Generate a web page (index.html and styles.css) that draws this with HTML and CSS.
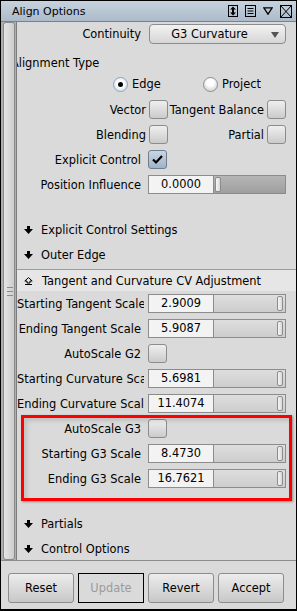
FILE: index.html
```html
<!DOCTYPE html>
<html lang="en">
<head>
  <meta charset="UTF-8">
  <title>Align Options</title>
  <link rel="stylesheet" href="styles.css">
</head>
<body>
  <div class="window">
    <div class="titlebar">
      <span class="title">Align Options</span>
      <div class="title-icons">
        <svg width="10" height="12" viewBox="0 0 10 12"><rect x="0.5" y="0.5" width="9" height="11" fill="none" stroke="#000"/><path d="M5 1.5 L8 4.5 H6 V7.5 H8 L5 10.5 L2 7.5 H4 V4.5 H2 Z" fill="#000"/></svg>
        <svg width="11" height="12" viewBox="0 0 11 12"><rect x="0.5" y="0.5" width="10" height="11" fill="none" stroke="#000"/><path d="M2.5 3.5 H8.5 M2.5 6 H8.5 M2.5 8.5 H8.5" stroke="#000"/></svg>
        <svg width="10" height="8" viewBox="0 0 10 8"><path d="M0.8 0.8 H9.2 L5 7.2 Z" fill="none" stroke="#000" stroke-width="1.3"/></svg>
        <svg width="12" height="13" viewBox="0 0 12 13"><rect x="0.5" y="0.5" width="11" height="12" fill="none" stroke="#000"/><path d="M0.5 0.5 L11.5 12.5 M11.5 0.5 L0.5 12.5" stroke="#000"/></svg>
      </div>
    </div>

    <div class="main">
      <div class="strip">
        <div class="strip-bar"><span class="grip"></span></div>
      </div>

      <div class="content">
        <div class="row top">
          <span class="lbl">Continuity</span>
          <div class="combo">G3 Curvature<span class="combo-arrow"></span></div>
        </div>

        <div class="group-title">Alignment Type</div>
        <div class="radios">
          <span class="radio-item"><span class="radio on"><span class="dot"></span></span>Edge</span>
          <span class="radio-item"><span class="radio"></span>Project</span>
        </div>

        <div class="checks first">
          <span class="lbl">Vector</span><span class="box"></span>
          <span class="lbl">Tangent Balance</span><span class="box"></span>
        </div>
        <div class="checks">
          <span class="lbl">Blending</span><span class="box"></span>
          <span class="lbl">Partial</span><span class="box"></span>
        </div>
        <div class="row">
          <span class="lbl">Explicit Control</span>
          <span class="box on"><svg width="13" height="11" viewBox="0 0 13 11"><path d="M2 5.5 L5 8.5 L11 2" fill="none" stroke="#000" stroke-width="2.2"/></svg></span>
        </div>
        <div class="row">
          <span class="lbl">Position Influence</span>
          <div class="numslider">
            <span class="field">0.0000</span>
            <span class="slider empty"><span class="thumb"></span></span>
          </div>
        </div>

        <div class="fold first">
          <svg class="arrow" width="9" height="8" viewBox="0 0 9 8"><path d="M3 0 H6 V3 H9 L4.5 8 L0 3 H3 Z" fill="#000"/></svg>
          Explicit Control Settings
        </div>
        <div class="fold">
          <svg class="arrow" width="9" height="8" viewBox="0 0 9 8"><path d="M3 0 H6 V3 H9 L4.5 8 L0 3 H3 Z" fill="#000"/></svg>
          Outer Edge
        </div>

        <div class="section-head">
          <svg width="9" height="8" viewBox="0 0 9 8"><path d="M4.5 0.6 L8.2 4 H6 V6 H3 V4 H0.8 Z" fill="none" stroke="#000"/><path d="M1 7.5 H8" stroke="#000"/></svg>
          Tangent and Curvature CV Adjustment
        </div>

        <div class="row">
          <span class="lbl">Starting Tangent Scale</span>
          <div class="numslider"><span class="field">2.9009</span><span class="slider"><span class="thumb"></span></span></div>
        </div>
        <div class="row">
          <span class="lbl">Ending Tangent Scale</span>
          <div class="numslider"><span class="field">5.9087</span><span class="slider"><span class="thumb"></span></span></div>
        </div>
        <div class="row">
          <span class="lbl">AutoScale G2</span>
          <span class="box"></span>
        </div>
        <div class="row">
          <span class="lbl">Starting Curvature Scale</span>
          <div class="numslider"><span class="field">5.6981</span><span class="slider"><span class="thumb"></span></span></div>
        </div>
        <div class="row">
          <span class="lbl">Ending Curvature Scale</span>
          <div class="numslider"><span class="field">11.4074</span><span class="slider"><span class="thumb"></span></span></div>
        </div>

        <div class="highlight">
          <div class="row">
            <span class="lbl">AutoScale G3</span>
            <span class="box"></span>
          </div>
          <div class="row">
            <span class="lbl">Starting G3 Scale</span>
            <div class="numslider"><span class="field">8.4730</span><span class="slider"><span class="thumb"></span></span></div>
          </div>
          <div class="row">
            <span class="lbl">Ending G3 Scale</span>
            <div class="numslider"><span class="field">16.7621</span><span class="slider"><span class="thumb"></span></span></div>
          </div>
        </div>

        <div class="fold first">
          <svg class="arrow" width="9" height="8" viewBox="0 0 9 8"><path d="M3 0 H6 V3 H9 L4.5 8 L0 3 H3 Z" fill="#000"/></svg>
          Partials
        </div>
        <div class="fold">
          <svg class="arrow" width="9" height="8" viewBox="0 0 9 8"><path d="M3 0 H6 V3 H9 L4.5 8 L0 3 H3 Z" fill="#000"/></svg>
          Control Options
        </div>
      </div>
    </div>

    <div class="buttons">
      <button class="btn">Reset</button>
      <button class="btn disabled">Update</button>
      <button class="btn">Revert</button>
      <button class="btn">Accept</button>
    </div>
  </div>
</body>
</html>
```

FILE: styles.css
```css
body {
  margin: 0;
  font-family: 'DejaVu Sans', sans-serif;
  font-size: 11.4px;
  color: #000;
}

.window {
  box-sizing: border-box;
  width: 297px;
  height: 611px;
  border: 1px solid #000;
  border-bottom-width: 2px;
  background: #dadada;
  display: flex;
  flex-direction: column;
}

.titlebar {
  height: 20px;
  border-bottom: 1px solid #76838f;
  background: linear-gradient(#c6d2de, #acbbca);
  display: flex;
  align-items: center;
  padding-left: 11px;
  padding-right: 4px;
}

.title {
  font-size: 11px;
}

.title-icons {
  margin-left: auto;
  display: flex;
  align-items: center;
  gap: 7px;
}

.title-icons svg {
  display: block;
}

.main {
  height: 538px;
  display: flex;
}

.strip {
  width: 15px;
  background: #aeaeae;
  padding: 0 1px 0 2px;
  box-sizing: border-box;
  display: flex;
}

.strip-bar {
  flex: 1;
  border: 1px solid #8a8a8a;
  border-radius: 3px;
  background: linear-gradient(to right, #e4e4e4, #cdcdcd);
  display: flex;
  align-items: center;
  justify-content: center;
}

.grip {
  width: 6px;
  height: 7px;
  border-top: 1px solid #8a8a8a;
  border-bottom: 1px solid #8a8a8a;
  background: linear-gradient(#8a8a8a, #8a8a8a) center / 6px 1px no-repeat;
  margin-left: 1px;
}

.content {
  flex: 1;
  border-left: 1px solid #7c7c7c;
  overflow: hidden;
}

.row {
  height: 25px;
  display: grid;
  grid-template-columns: 127px auto;
  column-gap: 4px;
  align-items: center;
}

.row.top {
  height: 24px;
}

.lbl {
  text-align: right;
  white-space: nowrap;
  overflow: hidden;
  padding-right: 3px;
}

.combo {
  box-sizing: border-box;
  width: 137px;
  height: 20px;
  margin-left: 1px;
  border: 1px solid #8c8c8c;
  border-radius: 4px;
  background: linear-gradient(#f2f2f2, #d6d6d6);
  display: flex;
  align-items: center;
  justify-content: center;
  padding-right: 16px;
  position: relative;
}

.combo-arrow {
  position: absolute;
  right: 6px;
  top: 7px;
  width: 0;
  height: 0;
  border-left: 4px solid transparent;
  border-right: 4px solid transparent;
  border-top: 6px solid #555;
}

.group-title {
  margin-top: 7px;
  height: 20px;
  line-height: 20px;
  margin-left: -6px;
  white-space: nowrap;
}

.radios {
  height: 22px;
  display: grid;
  grid-template-columns: 90px 90px;
  padding-left: 96px;
  align-items: center;
}

.radio-item {
  display: flex;
  align-items: center;
  gap: 4px;
}

.radio {
  box-sizing: border-box;
  width: 15px;
  height: 15px;
  border-radius: 50%;
  border: 1px solid #8e8e8e;
  background: radial-gradient(circle at 50% 35%, #ffffff 30%, #c4c4c4 100%);
  display: flex;
  align-items: center;
  justify-content: center;
}

.radio.on {
  border-color: #8ea4bb;
  background: radial-gradient(circle at 50% 45%, #ffffff 35%, #bccbdb 100%);
}

.dot {
  width: 5px;
  height: 5px;
  border-radius: 50%;
  background: #000;
}

.checks {
  height: 25px;
  display: grid;
  grid-template-columns: 132px 19px 99px 19px;
  align-items: center;
}

.checks.first {
  margin-top: 2px;
}

.box {
  box-sizing: border-box;
  width: 19px;
  height: 19px;
  border: 1px solid #8c8c8c;
  border-radius: 3px;
  background: linear-gradient(#efefef, #cbcbcb);
  display: flex;
  align-items: center;
  justify-content: center;
}

.box.on {
  border-color: #6f7d8c;
  background: linear-gradient(#c8d6e4, #9fb3c8);
}

.box svg {
  display: block;
}

.numslider {
  display: flex;
  height: 19px;
}

.field {
  box-sizing: border-box;
  width: 66px;
  height: 19px;
  border: 1px solid #8c8c8c;
  background: #f3f3f3;
  text-align: center;
  line-height: 17px;
}

.slider {
  box-sizing: border-box;
  width: 72px;
  height: 19px;
  border: 1px solid #8c8c8c;
  border-left: none;
  background: linear-gradient(#dedede, #cdcdcd);
  display: flex;
  justify-content: flex-end;
  padding: 1px 2px;
}

.slider.empty {
  background: linear-gradient(#b6b6b6, #9e9e9e);
  justify-content: flex-start;
  padding-left: 1px;
}

.thumb {
  box-sizing: border-box;
  width: 6px;
  border: 1px solid #8c8c8c;
  border-radius: 2px;
  background: linear-gradient(to right, #f6f6f6, #d8d8d8);
}

.fold {
  height: 25px;
  display: flex;
  align-items: center;
  gap: 8px;
  padding-left: 7px;
  white-space: nowrap;
}

.fold.first {
  margin-top: 20px;
}

.fold .arrow {
  display: block;
}

.section-head {
  margin-top: 2px;
  height: 21px;
  border-top: 1px solid #9c9c9c;
  background: #e6e6e6;
  display: flex;
  align-items: center;
  gap: 9px;
  padding-left: 7px;
  white-space: nowrap;
}

.highlight {
  position: relative;
}

.highlight::after {
  content: '';
  position: absolute;
  top: -1px;
  left: 4px;
  right: 4px;
  bottom: -10px;
  border: 3px solid #ff0000;
  box-shadow: 1px 1px 2px rgba(0, 0, 0, 0.35), inset 3px 3px 4px rgba(0, 0, 0, 0.12);
  pointer-events: none;
}

.buttons {
  flex: 1;
  border-top: 1px solid #8c8c8c;
  display: flex;
  gap: 4px;
  padding: 12px 0 0 7px;
}

.btn {
  box-sizing: border-box;
  width: 66px;
  height: 30px;
  border: 1px solid #8c8c8c;
  border-radius: 3px;
  background: linear-gradient(#ececec, #c8c8c8);
  font-family: 'DejaVu Sans', sans-serif;
  font-size: 11.4px;
  color: #000;
  padding: 0;
}

.btn.disabled {
  border-color: #000;
  border-radius: 0;
  background: #dadada;
  color: #9a9a9a;
}
```
